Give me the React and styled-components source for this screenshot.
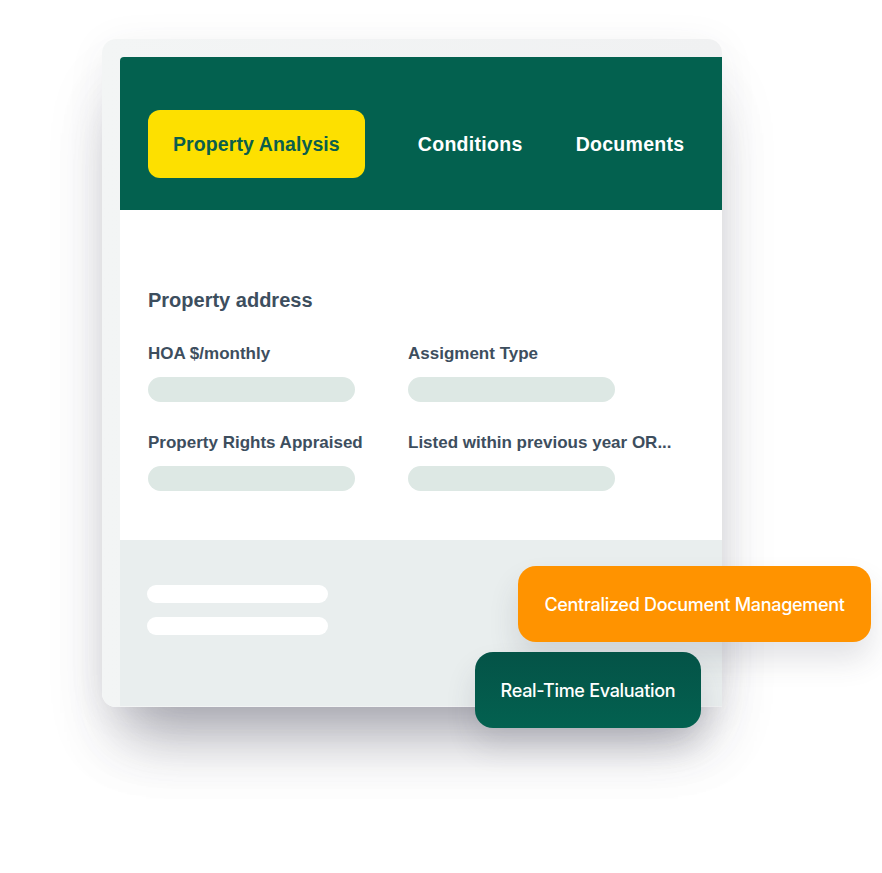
import React from "react";
import styled, { createGlobalStyle } from "styled-components";

const Global = createGlobalStyle`
  html, body { margin: 0; padding: 0; background: #ffffff; }
  body { font-family: "Liberation Sans", Arial, sans-serif; }
`;

const Stage = styled.div`
  position: relative;
  width: 882px;
  height: 873px;
  padding: 39px 0 0 102px;
  box-sizing: border-box;
  overflow: hidden;
`;

const Frame = styled.div`
  width: 620px;
  height: 668px;
  box-sizing: border-box;
  padding: 18px 0 1px 18px;
  background: linear-gradient(90deg, #f3f5f5 0%, #f0f1f2 100%);
  border-radius: 14px 14px 0 14px;
  box-shadow: 0 50px 55px -25px rgba(60, 60, 80, 0.38),
    0 40px 70px -10px rgba(60, 60, 80, 0.12),
    0 5px 40px rgba(60, 60, 80, 0.06);
  display: flex;
`;

const Screen = styled.div`
  flex: 1;
  display: flex;
  flex-direction: column;
  background: #ffffff;
  border-top-left-radius: 4px;
  overflow: hidden;
`;

const Header = styled.div`
  height: 153px;
  box-sizing: border-box;
  background: #03614f;
  padding: 53px 0 0 28px;
  display: flex;
  align-items: flex-start;
  gap: 53px;
`;

const Tab = styled.div`
  height: 68px;
  padding: 0 ${(p) => (p.$active ? "25px" : "0")};
  display: flex;
  align-items: center;
  border-radius: 12px;
  font-size: 19.5px;
  font-weight: 700;
  letter-spacing: ${(p) => (p.$active ? "0.1px" : "0.3px")};
  color: ${(p) => (p.$active ? "#0b5e4c" : "#ffffff")};
  background: ${(p) => (p.$active ? "#fde000" : "transparent")};
`;

const Body = styled.div`
  height: 330px;
  box-sizing: border-box;
  padding: 78px 28px 0 28px;
  color: #3d4e5e;
`;

const Title = styled.div`
  font-size: 20px;
  font-weight: 700;
  line-height: 24px;
  margin-bottom: 32px;
`;

const Grid = styled.div`
  display: grid;
  grid-template-columns: 260px 260px;
  row-gap: 31px;
`;

const Field = styled.div`
  display: flex;
  flex-direction: column;
  gap: 13px;
`;

const Label = styled.div`
  font-size: 17px;
  font-weight: 700;
  line-height: 20px;
  white-space: nowrap;
`;

const Bar = styled.div`
  width: 207px;
  height: 25px;
  border-radius: 13px;
  background: #dde8e4;
`;

const Footer = styled.div`
  flex: 1;
  background: #e9eeee;
  padding: 45px 0 0 27px;
  display: flex;
  flex-direction: column;
  gap: 14px;
`;

const Line = styled.div`
  width: 181px;
  height: 18px;
  border-radius: 9px;
  background: #ffffff;
`;

const Chip = styled.div`
  position: absolute;
  left: ${(p) => p.$x}px;
  top: ${(p) => p.$y}px;
  width: ${(p) => p.$w}px;
  height: 76px;
  box-sizing: border-box;
  border-radius: 18px;
  display: flex;
  align-items: center;
  justify-content: center;
  font-family: Inter, "Noto Sans", sans-serif;
  font-size: 18px;
  font-weight: 500;
  letter-spacing: -0.3px;
  color: #ffffff;
  background: ${(p) => p.$bg};
  box-shadow: 0 18px 30px rgba(60, 60, 80, 0.14);
`;

export default function App() {
  return (
    <>
      <Global />
      <Stage>
        <Frame>
          <Screen>
            <Header>
              <Tab $active>Property Analysis</Tab>
              <Tab>Conditions</Tab>
              <Tab>Documents</Tab>
            </Header>
            <Body>
              <Title>Property address</Title>
              <Grid>
                <Field>
                  <Label>HOA $/monthly</Label>
                  <Bar />
                </Field>
                <Field>
                  <Label>Assigment Type</Label>
                  <Bar />
                </Field>
                <Field>
                  <Label>Property Rights Appraised</Label>
                  <Bar />
                </Field>
                <Field>
                  <Label>Listed within previous year OR...</Label>
                  <Bar />
                </Field>
              </Grid>
            </Body>
            <Footer>
              <Line />
              <Line />
            </Footer>
          </Screen>
        </Frame>
        <Chip $x={518} $y={566} $w={353} $bg="#ff9300">
          Centralized Document Management
        </Chip>
        <Chip $x={475} $y={652} $w={226} $bg="linear-gradient(180deg, #045347 0%, #036150 100%)">
          Real-Time Evaluation
        </Chip>
      </Stage>
    </>
  );
}
